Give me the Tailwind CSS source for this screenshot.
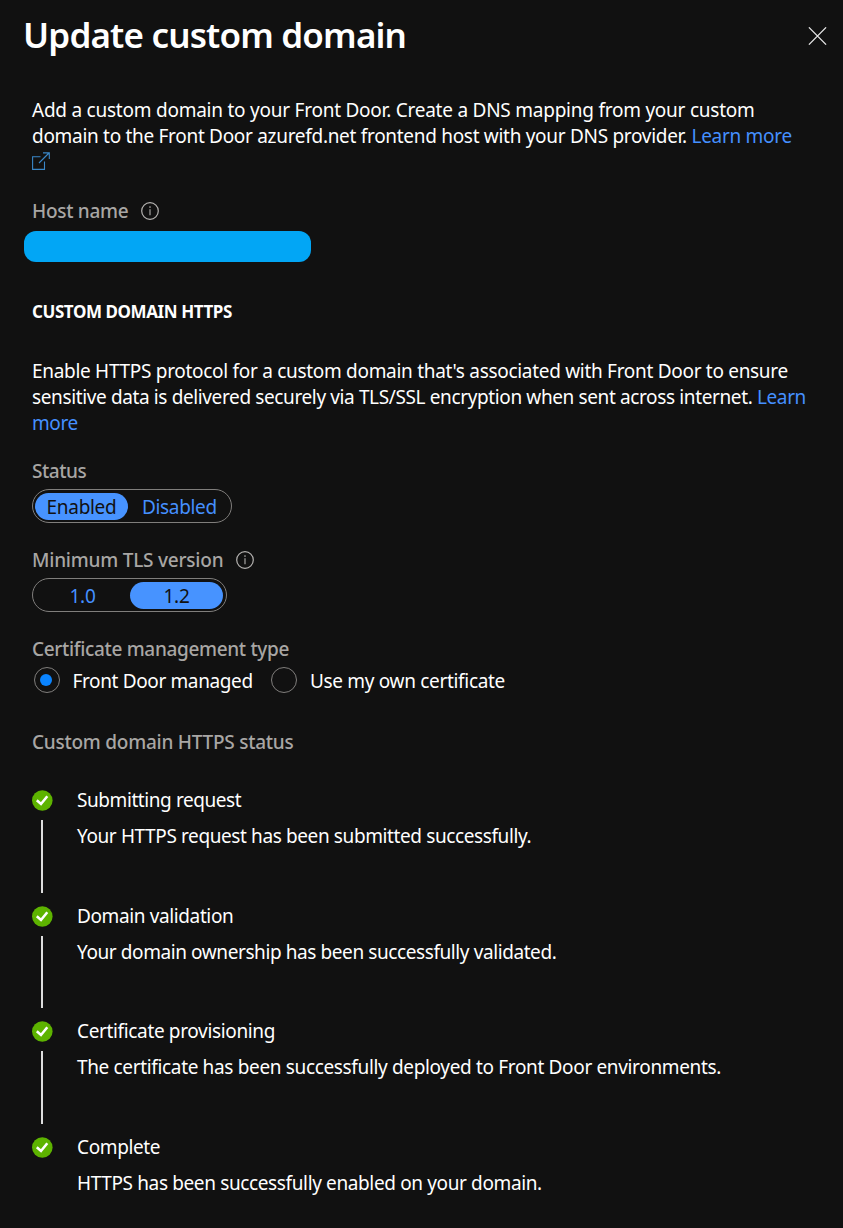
<!DOCTYPE html>
<html lang="en">
<head>
<meta charset="utf-8">
<title>Update custom domain</title>
<script src="https://cdn.jsdelivr.net/npm/@tailwindcss/browser@4"></script>
</head>
<body class="bg-[#111111]">
<svg class="hidden">
  <symbol id="info" viewBox="0 0 18 18"><circle cx="9" cy="9" r="8.3" fill="none" stroke="#b5b3b1" stroke-width="1.2"/><path d="M9 7.3v6" stroke="#b5b3b1" stroke-width="1.1"/><circle cx="9" cy="5.1" r=".8" fill="#b5b3b1"/></symbol>
  <symbol id="check" viewBox="0 0 21 21"><circle cx="10.3" cy="10.5" r="10.3" fill="#5db300"/><path d="M4.8 10.3l4.2 3.7 6.3-7.7" fill="none" stroke="#fff" stroke-width="2.6"/></symbol>
</svg>
<main class="h-[1228px] w-[843px] overflow-hidden bg-[#111111] font-['Noto_Sans','Open_Sans',sans-serif] text-[19px] leading-[26px] whitespace-nowrap text-white">
  <header class="flex h-[97px] items-start justify-between pt-[11px] pr-4 pl-[23px]">
    <h1 class="text-[35px] leading-[48px] font-semibold tracking-[-0.83px]">Update custom domain</h1>
    <button class="mt-[16px]" aria-label="Close"><svg class="block h-[18px] w-[19px]" viewBox="0 0 19 18"><path d="M.9.4l17.2 17.2M18.1.4L.9 17.6" stroke="#e6e6e6" stroke-width="1.3"/></svg></button>
  </header>

  <div class="flex flex-col items-start pl-[32px]">
    <p class="h-[101px]">
      <span class="block tracking-[-0.24px]">Add a custom domain to your Front Door. Create a DNS mapping from your custom</span>
      <span class="block tracking-[-0.3px]">domain to the Front Door azurefd.net frontend host with your DNS provider. <a class="text-[#4590ff]">Learn more</a></span>
      <svg class="mt-[3px] block h-[18px] w-[18px]" viewBox="0 0 18 18" fill="none" stroke="#3a87c8" stroke-width="1.1"><path d="M8.5 4.7H.6v12.7h11.9V9.5M7 11L17 1M11 .9h6.3v6"/></svg>
    </p>

    <div class="flex h-[33px] items-start"><span class="w-[97px] font-medium tracking-[-0.3px] text-[#a8a6a4]">Host name</span><svg class="mt-[4px] ml-[12px] h-[18px] w-[18px]"><use href="#info"/></svg></div>
    <div class="-ml-[8px] h-[31px] w-[287px] rounded-[12px] bg-[#02a6f5]"></div>

    <h2 class="mt-[37px] h-[59px] text-[17px] font-bold tracking-[-0.42px]">CUSTOM DOMAIN HTTPS</h2>

    <p class="h-[100px]">
      <span class="block tracking-[-0.3px]">Enable HTTPS protocol for a custom domain that's associated with Front Door to ensure</span>
      <span class="block tracking-[-0.375px]">sensitive data is delivered securely via TLS/SSL encryption when sent across internet. <a class="text-[#4590ff]">Learn</a></span>
      <a class="block tracking-[-0.4px] text-[#4590ff]">more</a>
    </p>

    <div class="h-[31px] font-medium tracking-[-0.45px] text-[#a8a6a4]">Status</div>
    <div class="flex h-[34px] w-[200px] items-center rounded-full border border-[#807e7c] pl-[2px]">
      <span class="flex h-[27px] w-[93px] items-center justify-center rounded-full bg-[#4793ff] tracking-[-0.3px] text-[#111111]"><span class="relative top-px">Enabled</span></span>
      <span class="relative top-px ml-[14px] tracking-[-0.35px] text-[#4590ff]">Disabled</span>
    </div>

    <div class="mt-[24px] flex h-[31px] items-start"><span class="w-[193px] font-medium tracking-[-0.22px] text-[#a8a6a4]">Minimum TLS version</span><svg class="mt-[4px] ml-[11px] h-[18px] w-[18px]"><use href="#info"/></svg></div>
    <div class="flex h-[34px] w-[195px] items-center rounded-full border border-[#807e7c] pl-[2px]">
      <span class="flex w-[95px] justify-center tracking-[-0.3px] text-[#4590ff]"><span class="relative top-px">1.0</span></span>
      <span class="flex h-[27px] w-[93px] items-center justify-center rounded-full bg-[#4793ff] tracking-[-0.3px] text-[#111111]"><span class="relative top-px">1.2</span></span>
    </div>

    <div class="mt-[24px] h-[31px] font-medium tracking-[-0.33px] text-[#a8a6a4]">Certificate management type</div>
    <div class="flex h-[62px] items-start pl-[2px]">
      <span class="flex h-[26px] w-[26px] items-center justify-center rounded-full border border-[#807e7c]"><span class="mr-[2px] h-[12px] w-[12px] rounded-full bg-[#0a84ff]"></span></span>
      <span class="mt-px ml-[12.5px] w-[198.5px] tracking-[-0.37px]">Front Door managed</span>
      <span class="h-[26px] w-[26px] rounded-full border border-[#807e7c]"></span>
      <span class="mt-px ml-[13px] tracking-[-0.32px]">Use my own certificate</span>
    </div>

    <div class="h-[58px] font-medium tracking-[-0.25px] text-[#a8a6a4]">Custom domain HTTPS status</div>

    <ol>
      <li class="flex h-[115.6px]">
        <div class="flex w-[45px] flex-col items-start pt-[3px]"><svg class="h-[21px] w-[21px]"><use href="#check"/></svg><i class="mt-[9px] ml-[9px] h-[73px] w-[2px] bg-[#dddddd]"></i></div>
        <div><p class="h-[36px] tracking-[-0.42px]">Submitting request</p><p class="tracking-[-0.39px]">Your HTTPS request has been submitted successfully.</p></div>
      </li>
      <li class="flex h-[115.6px]">
        <div class="flex w-[45px] flex-col items-start pt-[3px]"><svg class="h-[21px] w-[21px]"><use href="#check"/></svg><i class="mt-[9px] ml-[9px] h-[72px] w-[2px] bg-[#dddddd]"></i></div>
        <div><p class="h-[36px] tracking-[-0.38px]">Domain validation</p><p class="tracking-[-0.41px]">Your domain ownership has been successfully validated.</p></div>
      </li>
      <li class="flex h-[115.6px]">
        <div class="flex w-[45px] flex-col items-start pt-[3px]"><svg class="h-[21px] w-[21px]"><use href="#check"/></svg><i class="mt-[9px] ml-[9px] h-[73px] w-[2px] bg-[#dddddd]"></i></div>
        <div><p class="h-[36px] tracking-[-0.35px]">Certificate provisioning</p><p class="tracking-[-0.345px]">The certificate has been successfully deployed to Front Door environments.</p></div>
      </li>
      <li class="flex">
        <div class="flex w-[45px] flex-col items-start pt-[3px]"><svg class="h-[21px] w-[21px]"><use href="#check"/></svg></div>
        <div><p class="h-[36px] tracking-[-0.38px]">Complete</p><p class="tracking-[-0.37px]">HTTPS has been successfully enabled on your domain.</p></div>
      </li>
    </ol>
  </div>
</main>
</body>
</html>
